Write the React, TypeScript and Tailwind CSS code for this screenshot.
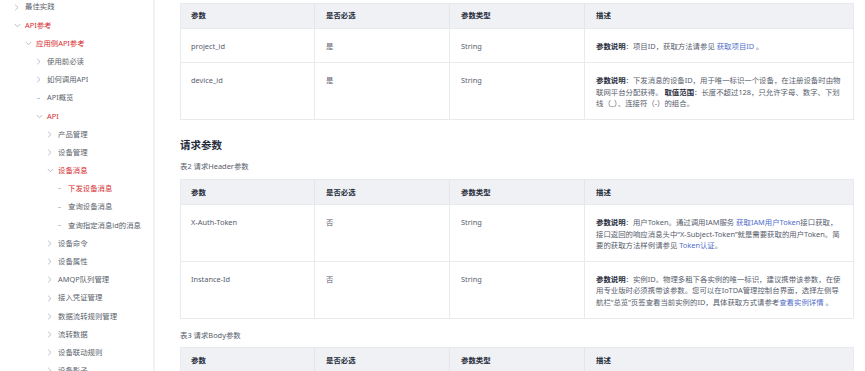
import React from "react";

type Item = { label: string; level: number; icon: "right" | "down" | "dash"; active?: boolean };

const items: Item[] = [
  { label: "最佳实践", level: 0, icon: "right" },
  { label: "API参考", level: 0, icon: "down", active: true },
  { label: "应用侧API参考", level: 1, icon: "down", active: true },
  { label: "使用前必读", level: 2, icon: "right" },
  { label: "如何调用API", level: 2, icon: "right" },
  { label: "API概览", level: 2, icon: "dash" },
  { label: "API", level: 2, icon: "down", active: true },
  { label: "产品管理", level: 3, icon: "right" },
  { label: "设备管理", level: 3, icon: "right" },
  { label: "设备消息", level: 3, icon: "down", active: true },
  { label: "下发设备消息", level: 4, icon: "dash", active: true },
  { label: "查询设备消息", level: 4, icon: "dash" },
  { label: "查询指定消息id的消息", level: 4, icon: "dash" },
  { label: "设备命令", level: 3, icon: "right" },
  { label: "设备属性", level: 3, icon: "right" },
  { label: "AMQP队列管理", level: 3, icon: "right" },
  { label: "接入凭证管理", level: 3, icon: "right" },
  { label: "数据流转规则管理", level: 3, icon: "right" },
  { label: "流转数据", level: 3, icon: "right" },
  { label: "设备联动规则", level: 3, icon: "right" },
  { label: "设备影子", level: 3, icon: "right" },
];

const padByLevel = ["pl-[14px]", "pl-[25px]", "pl-[36px]", "pl-[47px]", "pl-[57px]"];

function Icon({ kind }: { kind: Item["icon"] }) {
  if (kind === "right")
    return (
      <svg width="6" height="7" viewBox="0 0 6 7" className="block">
        <polyline points="1.2,0.8 4,3.5 1.2,6.2" fill="none" stroke="#b4b7be" strokeWidth="0.9" />
      </svg>
    );
  if (kind === "down")
    return (
      <svg width="7" height="5" viewBox="0 0 7 5" className="block">
        <polyline points="0.8,1 3.5,3.8 6.2,1" fill="none" stroke="#b4b7be" strokeWidth="0.9" />
      </svg>
    );
  return <div className="w-[3px] h-[1px] bg-[#c5c8ce] ml-[1px]" />;
}

function Sidebar() {
  return (
    <div className="w-[155px] shrink-0 h-full border-r-2 border-[#f2f2f3] overflow-hidden">
      <div className="-mt-[2px]">
        {items.map((it, i) => (
          <div key={i} className={`h-[18.2px] flex items-center ${padByLevel[it.level]}`}>
            <div className="w-[11px] shrink-0 flex items-center">
              <Icon kind={it.icon} />
            </div>
            <span
              className={`text-[7.4px] leading-none whitespace-nowrap ${
                it.active ? "text-[#d62b2f]" : "text-[#5a5f6b]"
              }`}
            >
              {it.label}
            </span>
          </div>
        ))}
      </div>
    </div>
  );
}

const B = ({ children }: { children: React.ReactNode }) => (
  <span className="font-bold text-[#252b3a]">{children}</span>
);
const L = ({ children }: { children: React.ReactNode }) => (
  <span className="text-[#526ecc]">{children}</span>
);

type Row = { name: string; req: string; type: string; desc: React.ReactNode[] };

function Line({ children }: { children: React.ReactNode }) {
  return <div className="h-[11.3px] flex items-center whitespace-nowrap overflow-visible">{children}</div>;
}

function ParamTable({ rows }: { rows: Row[] }) {
  return (
    <div className="w-[674px] border border-[#e8eaee]">
      <div className="grid grid-cols-[133px_135px_135px_1fr] h-[24px] bg-[#eff1f4] font-bold text-[#252b3a]">
        <div className="flex items-center pl-[10px]">参数</div>
        <div className="flex items-center pl-[11px] border-l border-[#e3e5ea]">是否必选</div>
        <div className="flex items-center pl-[11px] border-l border-[#e3e5ea]">参数类型</div>
        <div className="flex items-center pl-[11px] border-l border-[#e3e5ea]">描述</div>
      </div>
      {rows.map((r, i) => (
        <div
          key={i}
          className="grid grid-cols-[133px_135px_135px_1fr] border-t border-[#e8eaee] text-[#575d6c]"
        >
          <div className="pl-[10px] pt-[12px] pb-[10px]">
            <Line>{r.name}</Line>
          </div>
          <div className="pl-[11px] pt-[12px] pb-[10px] border-l border-[#e8eaee]">
            <Line>{r.req}</Line>
          </div>
          <div className="pl-[11px] pt-[12px] pb-[10px] border-l border-[#e8eaee]">
            <Line>{r.type}</Line>
          </div>
          <div className="pl-[11px] pt-[12px] pb-[10px] border-l border-[#e8eaee]">
            {r.desc.map((d, j) => (
              <Line key={j}>{d}</Line>
            ))}
          </div>
        </div>
      ))}
    </div>
  );
}

const t1: Row[] = [
  {
    name: "project_id",
    req: "是",
    type: "String",
    desc: [
      <>
        <B>参数说明</B>：项目ID，获取方法请参见&nbsp;<L>获取项目ID</L>&nbsp;。
      </>,
    ],
  },
  {
    name: "device_id",
    req: "是",
    type: "String",
    desc: [
      <>
        <B>参数说明</B>：下发消息的设备ID，用于唯一标识一个设备，在注册设备时由物
      </>,
      <>
        联网平台分配获得。&nbsp;<B>取值范围</B>：长度不超过128，只允许字母、数字、下划
      </>,
      <>线（_）、连接符（-）的组合。</>,
    ],
  },
];

const t2: Row[] = [
  {
    name: "X-Auth-Token",
    req: "否",
    type: "String",
    desc: [
      <>
        <B>参数说明</B>：用户Token。通过调用IAM服务&nbsp;<L>获取IAM用户Token</L>接口获取，
      </>,
      <>接口返回的响应消息头中“X-Subject-Token”就是需要获取的用户Token。简</>,
      <>
        要的获取方法样例请参见&nbsp;<L>Token认证</L>。
      </>,
    ],
  },
  {
    name: "Instance-Id",
    req: "否",
    type: "String",
    desc: [
      <>
        <B>参数说明</B>：实例ID。物理多租下各实例的唯一标识，建议携带该参数，在使
      </>,
      <>用专业版时必须携带该参数。您可以在IoTDA管理控制台界面，选择左侧导</>,
      <>
        航栏“总览”页签查看当前实例的ID，具体获取方式请参考<L>查看实例详情</L>&nbsp;。
      </>,
    ],
  },
];

export default function App() {
  return (
    <div className="w-[865px] h-[371px] overflow-hidden flex bg-white font-['Noto_Sans','Noto_Sans_CJK_SC',sans-serif] text-[7.4px]">
      <Sidebar />
      <div className="pl-[25px] pt-[3px] flex flex-col">
        <ParamTable rows={t1} />
        <div className="mt-[19px] h-[14px] flex items-center text-[10.5px] font-bold text-[#252b3a]">请求参数</div>
        <div className="mt-[8px] h-[11px] flex items-center text-[#575d6c]">表2 请求Header参数</div>
        <div className="mt-[7px]">
          <ParamTable rows={t2} />
        </div>
        <div className="mt-[11.5px] h-[11px] flex items-center text-[#575d6c]">表3 请求Body参数</div>
        <div className="mt-[6px]">
          <ParamTable rows={[]} />
        </div>
      </div>
    </div>
  );
}
